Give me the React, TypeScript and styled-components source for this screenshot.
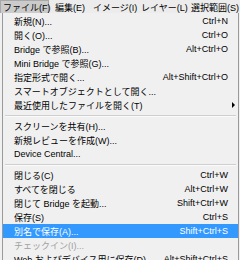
import React from "react";
import styled, { createGlobalStyle } from "styled-components";

const Global = createGlobalStyle`
  html, body { margin: 0; padding: 0; background: #f0f0f0; overflow: hidden; }
  body { width: 240px; height: 260px; font-family: "Liberation Sans", "Noto Sans CJK JP", sans-serif; font-size: 9px; color: #000; }
`;

const Page = styled.div`
  width: 240px;
  height: 260px;
  overflow: hidden;
  display: flex;
  flex-direction: column;
`;

const MenuBar = styled.div`
  height: 13px;
  display: flex;
  align-items: stretch;
  background: #ececec;
`;

const BarItem = styled.div<{ $active?: boolean; $w: number }>`
  width: ${(p) => p.$w}px;
  flex: none;
  box-sizing: border-box;
  padding-left: 2px;
  margin-right: ${(p) => (p.$active ? 3 : 0)}px;
  display: flex;
  align-items: center;
  white-space: nowrap;
  background: ${(p) => (p.$active ? "#cbcbcb" : "transparent")};
  border: 1px solid ${(p) => (p.$active ? "#a8a8a8" : "transparent")};
  border-bottom: none;
`;

const Menu = styled.div`
  margin-left: 2px;
  width: 237px;
  box-sizing: border-box;
  flex: 1;
  border-left: 1px solid #9a9a9a;
  border-right: 1px solid #9a9a9a;
  background: #f0f0f0;
  padding-top: 1px;
  display: flex;
  flex-direction: column;
`;

const Row = styled.div<{ $hl?: boolean; $disabled?: boolean }>`
  height: 14px;
  flex: none;
  display: grid;
  grid-template-columns: 1fr auto 10px;
  align-items: center;
  padding-left: 11px;
  white-space: nowrap;
  background: ${(p) => (p.$hl ? "#3399ff" : "transparent")};
  color: ${(p) => (p.$hl ? "#fff" : p.$disabled ? "#a0a0a0" : "#000")};
`;

const Shortcut = styled.span`
  text-align: right;
`;

const ArrowCell = styled.span`
  display: flex;
  align-items: center;
  padding-left: 4px;
`;

const Arrow = styled.span`
  width: 0;
  height: 0;
  border-top: 3px solid transparent;
  border-bottom: 3px solid transparent;
  border-left: 3px solid #000;
`;

const Separator = styled.div`
  height: 7px;
  flex: none;
  display: flex;
  align-items: center;
  padding: 0 2px;
  &::after {
    content: "";
    flex: 1;
    height: 1px;
    background: #cfcfcf;
    box-shadow: 0 1px 0 #fafafa;
  }
`;

type Item =
  | { sep: true }
  | { label: string; sc?: string; sub?: boolean; hl?: boolean; disabled?: boolean; sep?: false };

const items: Item[] = [
  { label: "新規(N)...", sc: "Ctrl+N" },
  { label: "開く(O)...", sc: "Ctrl+O" },
  { label: "Bridge で参照(B)...", sc: "Alt+Ctrl+O" },
  { label: "Mini Bridge で参照(G)..." },
  { label: "指定形式で開く...", sc: "Alt+Shift+Ctrl+O" },
  { label: "スマートオブジェクトとして開く..." },
  { label: "最近使用したファイルを開く(T)", sub: true },
  { sep: true },
  { label: "スクリーンを共有(H)..." },
  { label: "新規レビューを作成(W)..." },
  { label: "Device Central..." },
  { sep: true },
  { label: "閉じる(C)", sc: "Ctrl+W" },
  { label: "すべてを閉じる", sc: "Alt+Ctrl+W" },
  { label: "閉じて Bridge を起動...", sc: "Shift+Ctrl+W" },
  { label: "保存(S)", sc: "Ctrl+S" },
  { label: "別名で保存(A)...", sc: "Shift+Ctrl+S", hl: true },
  { label: "チェックイン(I)...", disabled: true },
  { label: "Web およびデバイス用に保存(D)...", sc: "Alt+Shift+Ctrl+S" },
];

const bar = [
  { t: "ファイル(F)", w: 49, active: true },
  { t: "編集(E)", w: 38 },
  { t: "イメージ(I)", w: 48 },
  { t: "レイヤー(L)", w: 50 },
  { t: "選択範囲(S)", w: 52 },
];

export default function App() {
  return (
    <Page>
      <Global />
      <MenuBar>
        {bar.map((b, i) => (
          <BarItem key={i} $active={b.active} $w={b.w}>
            {b.t}
          </BarItem>
        ))}
      </MenuBar>
      <Menu>
        {items.map((it, i) =>
          it.sep ? (
            <Separator key={i} />
          ) : (
            <Row key={i} $hl={it.hl} $disabled={it.disabled}>
              <span>{it.label}</span>
              <Shortcut>{it.sc ?? ""}</Shortcut>
              <ArrowCell>{it.sub ? <Arrow /> : null}</ArrowCell>
            </Row>
          )
        )}
      </Menu>
    </Page>
  );
}
